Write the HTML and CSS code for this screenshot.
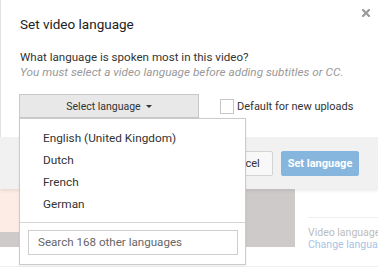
FILE: index.html
```html
<!DOCTYPE html>
<html>
<head>
<meta charset="utf-8">
<link rel="stylesheet" href="styles.css">
</head>
<body>
<div class="dialog">
  <div class="dialog-body">
    <button class="close" aria-label="Close">
      <svg width="8" height="8" viewBox="0 0 8 8"><path d="M1 1L7 7M7 1L1 7" stroke="#9a9a9a" stroke-width="2.2" stroke-linecap="square"/></svg>
    </button>
    <h1 class="title">Set video language</h1>
    <p class="question">What language is spoken most in this video?</p>
    <p class="hint">You must select a video language before adding subtitles or CC.</p>
    <div class="controls">
      <button class="select-btn">Select language <span class="caret"></span></button>
      <label class="default-check"><span class="box"></span>Default for new uploads</label>
    </div>
  </div>
  <div class="dialog-footer">
    <button class="btn cancel">Cancel</button>
    <button class="btn primary">Set language</button>
  </div>
</div>
<div class="page-bg">
  <div class="thumb"><div class="thumb-img"></div></div>
  <div class="side">
    <div class="side-label">Video language:</div>
    <div class="side-link">Change language</div>
  </div>
</div>
<div class="page-line"></div>

<div class="menu">
  <ul class="menu-list">
    <li>English (United Kingdom)</li>
    <li>Dutch</li>
    <li>French</li>
    <li>German</li>
  </ul>
  <div class="menu-search">
    <div class="search-input">Search 168 other languages</div>
  </div>
</div>
</body>
</html>
```
FILE: styles.css
```css
* { box-sizing: border-box; }
html, body { margin: 0; padding: 0; }
body {
  width: 378px;
  height: 269px;
  overflow: hidden;
  position: relative;
  background: #fff;
  font-family: Roboto, "Liberation Sans", Arial, sans-serif;
  color: #333;
}
button { font-family: inherit; }

.dialog { position: relative; z-index: 1; }
.dialog-body {
  position: relative;
  height: 137px;
  border-left: 1px solid #e2e2e2;
  padding: 15px 0 0 19px;
  background: #fff;
}
.close {
  position: absolute;
  top: 9px;
  right: 8px;
  width: 8px;
  height: 8px;
  padding: 0;
  border: 0;
  background: none;
  display: flex;
}
.title {
  margin: 0;
  font-size: 13.5px;
  font-weight: normal;
  line-height: 18px;
  color: #222;
}
.question, .hint {
  margin: 0;
  font-size: 11.6px;
  line-height: 15px;
}
.question { margin-top: 17px; color: #333; }
.hint { color: #999; font-style: italic; font-size: 11.75px; }
.controls {
  display: flex;
  align-items: center;
  margin-top: 14px;
}
.select-btn {
  width: 180px;
  height: 24px;
  margin-left: -1px;
  border: 1px solid #c8c8c8;
  background: #e8e8e8;
  color: #333;
  font-size: 10.5px;
  padding: 0;
  display: flex;
  align-items: center;
  justify-content: center;
}
.caret {
  display: inline-block;
  margin-left: 5px;
  border-left: 3px solid transparent;
  border-right: 3px solid transparent;
  border-top: 3px solid #333;
}
.default-check {
  display: flex;
  align-items: center;
  margin-left: 21px;
  font-size: 11px;
  color: #333;
}
.box {
  width: 14px;
  height: 15px;
  border: 1px solid #c6c6c6;
  background: #fff;
  margin-right: 3px;
}

.dialog-footer {
  height: 52px;
  background: #f1f1f1;
  display: flex;
  justify-content: flex-end;
  align-items: flex-start;
  padding: 14px 19px 0 0;
  gap: 8px;
  box-shadow: 0 2px 3px rgba(0,0,0,0.08);
}
.btn {
  height: 25px;
  font-size: 11px;
  padding: 0;
  border-radius: 2px;
  white-space: nowrap;
}
.cancel {
  border: 1px solid #d3d3d3;
  background: #f8f8f8;
  color: #333;
  width: 60px;
}
.primary {
  width: 78px;
  border: 1px solid #86b6de;
  background: #86b6de;
  color: #fff;
  font-weight: bold;
}

.page-bg {
  display: flex;
  height: 77px;
}
.thumb {
  width: 295px;
  height: 58px;
  background: #cdcac9;
  position: relative;
}
.thumb-img {
  width: 200px;
  height: 43px;
  background: linear-gradient(90deg, #fdebe5, #fbeee9);
}
.side {
  margin-left: 13px;
  margin-top: 28px;
  padding-top: 9px;
  border-top: 1px solid #eee;
  flex: 1;
  font-size: 10.5px;
  line-height: 12px;
  white-space: nowrap;
  overflow: hidden;
}
.side-label { color: #bcbcbc; }
.side-link { color: #a8c4e6; }
.page-line {
  height: 1px;
  background: #f0f0f0;
}

.menu {
  position: absolute;
  z-index: 2;
  left: 19px;
  top: 118px;
  width: 227px;
  height: 147px;
  background: #fff;
  border: 1px solid #cbcbcb;
  box-shadow: 0 1px 2px rgba(0,0,0,0.08);
}
.menu-list {
  list-style: none;
  margin: 0;
  padding: 8px 0 7px 0;
  border-bottom: 1px solid #d6d6d6;
}
.menu-list li {
  height: 22px;
  line-height: 22px;
  padding-left: 23px;
  font-size: 11.8px;
  color: #333;
}
.menu-search {
  padding: 7px 0 0 8px;
}
.search-input {
  width: 210px;
  height: 25px;
  border: 1px solid #cfcfcf;
  padding-left: 9px;
  line-height: 23px;
  font-size: 11.6px;
  color: #666;
}
```
